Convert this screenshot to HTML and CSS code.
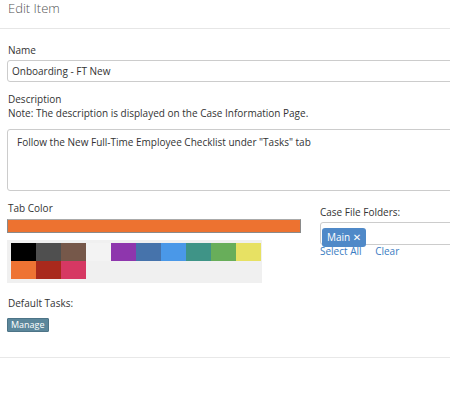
FILE: index.html
```html
<!DOCTYPE html>
<html lang="en">
<head>
    <meta charset="UTF-8">
    <meta name="viewport" content="width=device-width, initial-scale=1.0">
    <title>Edit Item</title>
    <link rel="stylesheet" href="styles.css">
</head>
<body>

    <div class="modal">
        <div class="modal-header">Edit Item</div>

        <div class="modal-body">
            <label class="field-label name-label">Name</label>
            <input class="text-input" type="text" value="Onboarding - FT New">

            <label class="field-label desc-label">Description</label>
            <div class="note">Note: The description is displayed on the Case Information Page.</div>
            <textarea class="text-area">Follow the New Full-Time Employee Checklist under "Tasks" tab</textarea>

            <div class="columns">
                <div class="col-left">
                    <label class="field-label color-label">Tab Color</label>
                    <div class="color-bar"></div>
                    <div class="palette">
                        <span class="swatch" style="background:#000000"></span>
                        <span class="swatch" style="background:#4f4f4f"></span>
                        <span class="swatch" style="background:#76584a"></span>
                        <span class="swatch" style="background:#f3f3f3"></span>
                        <span class="swatch" style="background:#8e36ad"></span>
                        <span class="swatch" style="background:#4673ab"></span>
                        <span class="swatch" style="background:#4a98e8"></span>
                        <span class="swatch" style="background:#3f9487"></span>
                        <span class="swatch" style="background:#68ae5a"></span>
                        <span class="swatch" style="background:#e7e163"></span>
                        <span class="swatch" style="background:#ee7333"></span>
                        <span class="swatch" style="background:#a9291c"></span>
                        <span class="swatch" style="background:#d63863"></span>
                    </div>

                    <label class="field-label tasks-label">Default Tasks:</label>
                    <button class="btn-manage">Manage</button>
                </div>

                <div class="col-right">
                    <label class="field-label folders-label">Case File Folders:</label>
                    <div class="tag-select">
                        <span class="tag">Main <span class="tag-x">&#10005;</span></span>
                    </div>
                    <div class="links">
                        <a href="#">Select All</a>
                        <a href="#">Clear</a>
                    </div>
                </div>
            </div>
        </div>

        <div class="modal-footer"></div>
    </div>

</body>
</html>
```

FILE: styles.css
```css
/* Page */
body {
    margin: 0;
    overflow: hidden;
    background: #fff;
    font-family: "Open Sans", "Liberation Sans", sans-serif;
    color: #333;
}

.modal {
    width: 620px;
}

/* Header */
.modal-header {
    height: 28px;
    padding-left: 8px;
    font-size: 13px;
    font-weight: 300;
    line-height: 16px;
    color: #555;
    border-bottom: 1px solid #e6e6e6;
}

/* Body */
.modal-body {
    padding: 0 0 0 7px;
}

.field-label {
    display: block;
    font-size: 10px;
    line-height: 14px;
    padding-left: 1px;
}

.name-label {
    margin-top: 14px;
}

.text-input {
    display: block;
    box-sizing: border-box;
    width: 100%;
    height: 22px;
    margin-top: 3px;
    padding: 0 4px;
    border: 1px solid #ccc;
    border-radius: 3px;
    font-family: inherit;
    font-size: 10px;
    color: #333;
}

.desc-label {
    margin-top: 10px;
}

.note {
    font-size: 10px;
    line-height: 14px;
    padding-left: 1px;
}

.text-area {
    display: block;
    box-sizing: border-box;
    width: 100%;
    height: 62px;
    margin-top: 9px;
    padding: 5px 9px;
    border: 1px solid #ccc;
    border-radius: 3px;
    font-family: inherit;
    font-size: 10px;
    line-height: 14px;
    color: #333;
    resize: none;
}

/* Two columns */
.columns {
    display: flex;
    gap: 19px;
}

.col-left {
    width: 294px;
}

.col-right {
    flex: 1;
}

.color-label {
    margin-top: 10px;
}

.color-bar {
    box-sizing: border-box;
    height: 14px;
    margin-top: 4px;
    background: #ed7230;
    border: 1px solid #8a8a8a;
    border-top-color: #aaa;
}

.palette {
    display: flex;
    flex-wrap: wrap;
    width: 250px;
    margin-top: 7px;
    padding: 3px 1px 4px 4px;
    background: #f0f0f0;
}

.swatch {
    width: 25px;
    height: 18px;
}

.tasks-label {
    margin-top: 13px;
}

.btn-manage {
    display: block;
    height: 14px;
    margin-top: 8px;
    padding: 0 3px;
    background: #5c879b;
    border: 1px solid #4d7487;
    border-radius: 1px;
    color: #fff;
    font-family: inherit;
    font-size: 9px;
    line-height: 12px;
}

/* Folders */
.folders-label {
    margin-top: 14px;
    padding-left: 0;
}

.tag-select {
    box-sizing: border-box;
    height: 23px;
    margin-top: 3px;
    padding: 1px;
    border: 1px solid #ccc;
    border-radius: 3px 0 0 3px;
}

.tag {
    display: inline-block;
    height: 19px;
    padding: 0 5px;
    background: #4f89c8;
    border-radius: 3px;
    color: #fff;
    font-size: 10px;
    line-height: 19px;
}

.tag-x {
    font-family: "DejaVu Sans", sans-serif;
    font-size: 10px;
}

.links {
    font-size: 10px;
    line-height: 13px;
}

.links a {
    color: #3a7cc2;
    text-decoration: none;
    margin-right: 11px;
}

/* Footer */
.modal-footer {
    height: 25px;
    border-bottom: 1px solid #e8e8e8;
}
```
